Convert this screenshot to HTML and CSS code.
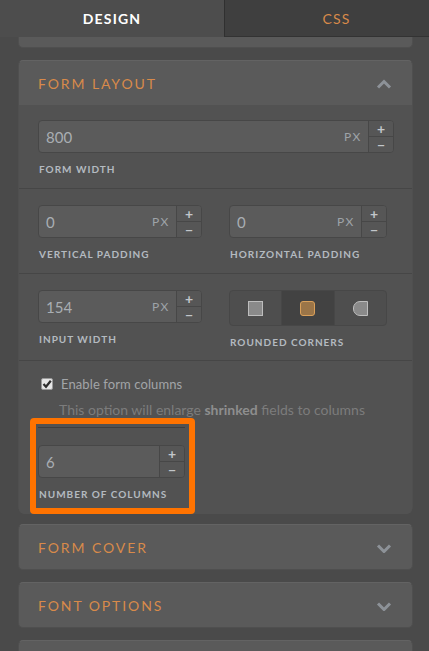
FILE: index.html
```html
<!DOCTYPE html>
<html lang="en">
<head>
  <meta charset="UTF-8">
  <meta name="viewport" content="width=device-width, initial-scale=1.0">
  <title>Form Designer</title>
  <link rel="stylesheet" href="styles.css">
</head>
<body>
  <div class="tabs">
    <div class="tab active">DESIGN</div>
    <div class="tab">CSS</div>
  </div>

  <div class="panel">
    <div class="card stub"></div>

    <div class="card">
      <div class="card-head">
        <span>FORM LAYOUT</span>
        <svg class="chevron" width="16" height="10" viewBox="0 0 16 10"><polyline points="2,8.5 8,2.5 14,8.5" /></svg>
      </div>
      <div class="card-body">
        <div class="section">
          <div class="field">
            <div class="num">
              <span class="val">800</span>
              <span class="unit">PX</span>
              <div class="spin"><span>+</span><span>&minus;</span></div>
            </div>
            <label>FORM WIDTH</label>
          </div>
        </div>

        <div class="section">
          <div class="cols">
            <div class="field">
              <div class="num">
                <span class="val">0</span>
                <span class="unit">PX</span>
                <div class="spin"><span>+</span><span>&minus;</span></div>
              </div>
              <label>VERTICAL PADDING</label>
            </div>
            <div class="field">
              <div class="num">
                <span class="val">0</span>
                <span class="unit">PX</span>
                <div class="spin"><span>+</span><span>&minus;</span></div>
              </div>
              <label>HORIZONTAL PADDING</label>
            </div>
          </div>
        </div>

        <div class="section third">
          <div class="cols">
            <div class="field">
              <div class="num">
                <span class="val">154</span>
                <span class="unit">PX</span>
                <div class="spin"><span>+</span><span>&minus;</span></div>
              </div>
              <label>INPUT WIDTH</label>
            </div>
            <div class="field">
              <div class="corners">
                <div class="corner"><i class="sq sharp"></i></div>
                <div class="corner on"><i class="sq soft"></i></div>
                <div class="corner"><i class="sq round"></i></div>
              </div>
              <label>ROUNDED CORNERS</label>
            </div>
          </div>
        </div>

        <div class="section last">
          <div class="check">
            <span class="box">
              <svg width="10" height="10" viewBox="0 0 10 10"><polyline points="1.5,5 4,7.8 8.8,1.8" /></svg>
            </span>
            Enable form columns
          </div>
          <p class="hint">This option will enlarge <b>shrinked</b> fields to columns</p>
          <div class="mark">
            <div class="mark-inner">
              <div class="field">
                <div class="num short">
                  <span class="val">6</span>
                  <div class="spin"><span>+</span><span>&minus;</span></div>
                </div>
                <label>NUMBER OF COLUMNS</label>
              </div>
            </div>
          </div>
        </div>
      </div>
    </div>

    <div class="card">
      <div class="card-head">
        <span>FORM COVER</span>
        <svg class="chevron" width="16" height="10" viewBox="0 0 16 10"><polyline points="2,2.5 8,8.5 14,2.5" /></svg>
      </div>
    </div>

    <div class="card">
      <div class="card-head">
        <span>FONT OPTIONS</span>
        <svg class="chevron" width="16" height="10" viewBox="0 0 16 10"><polyline points="2,2.5 8,8.5 14,2.5" /></svg>
      </div>
    </div>

    <div class="card">
      <div class="card-head"></div>
    </div>
  </div>
</body>
</html>
```

FILE: styles.css
```css
:root {
  --bg: #4a4a4a;
  --card: #5a5a5a;
  --body: #525252;
  --line: #464646;
  --orange: #d88a4a;
  --label: #b4bac0;
  --val: #a9aeb3;
}

html, body {
  margin: 0;
  padding: 0;
  overflow: hidden;
}
body {
  background: var(--bg);
  font-family: Lato, "Open Sans", sans-serif;
  width: 429px;
  height: 651px;
}

.tabs {
  display: flex;
  width: 448px;
  height: 37px;
}
.tab {
  width: 224px;
  flex: none;
  box-sizing: border-box;
  display: flex;
  align-items: center;
  justify-content: center;
  font-size: 14px;
  letter-spacing: 1.2px;
  color: var(--orange);
  background: #3f3f3f;
  border-left: 1px solid #303030;
  border-bottom: 1px solid #333;
}
.tab.active {
  background: #4d4d4d;
  color: #fff;
  font-weight: 700;
  border: none;
}

.panel {
  padding: 0 16px 0 18px;
}
.card {
  background: var(--card);
  border: 1px solid #4f4f4f;
  border-top-color: #636363;
  border-radius: 5px;
  margin-bottom: 12px;
}
.card.stub {
  height: 10px;
  border-top: none;
  border-radius: 0 0 5px 5px;
}
.card-head {
  height: 44px;
  display: flex;
  align-items: center;
  justify-content: space-between;
  padding: 0 20px 0 19px;
  font-size: 14px;
  letter-spacing: 1.9px;
  color: var(--orange);
}
.chevron {
  fill: none;
  stroke: #8d9298;
  stroke-width: 3;
  margin-top: 2px;
}
.card-body {
  background: var(--body);
  border-radius: 0 0 5px 5px;
}

.section {
  padding: 15px 18px 13px 19px;
  border-bottom: 1px solid var(--line);
}
.section + .section {
  padding-top: 16px;
}
.section.third {
  padding-bottom: 12px;
}
.section.last {
  border-bottom: none;
  padding-top: 15px;
  padding-bottom: 0;
}
.cols {
  display: grid;
  grid-template-columns: 164px 158px;
  column-gap: 27px;
}

.field label {
  display: block;
  margin-top: 10px;
  font-size: 10px;
  line-height: 12px;
  font-weight: 700;
  letter-spacing: 1px;
  color: var(--label);
  padding-left: 1px;
}
.num {
  display: flex;
  align-items: stretch;
  height: 33px;
  box-sizing: border-box;
  background: #5b5b5b;
  border: 1px solid #474747;
  border-radius: 4px;
}
.val {
  flex: 1;
  display: flex;
  align-items: center;
  padding-left: 7px;
  font-size: 15px;
  color: var(--val);
}
.unit {
  display: flex;
  align-items: center;
  padding-right: 6px;
  font-size: 12px;
  letter-spacing: 1.6px;
  color: #9ea3a8;
}
.spin {
  width: 24px;
  flex: none;
  display: flex;
  flex-direction: column;
  border-left: 1px solid #474747;
  background: #565656;
  border-radius: 0 3px 3px 0;
}
.spin span {
  flex: 1;
  display: flex;
  align-items: center;
  justify-content: center;
  font-size: 14px;
  font-weight: 700;
  line-height: 1;
  color: #c2c6ca;
}
.spin span + span {
  border-top: 1px solid #474747;
}

.corners {
  display: flex;
  height: 36px;
  box-sizing: border-box;
  border: 1px solid #474747;
  border-radius: 4px;
  background: #4e4e4e;
  overflow: hidden;
}
.corner {
  flex: 1;
  display: flex;
  align-items: center;
  justify-content: center;
}
.corner + .corner {
  border-left: 1px solid #474747;
}
.corner.on {
  background: #424242;
}
.sq {
  width: 13px;
  height: 13px;
  background: #8a8a8a;
  border: 1px solid #bdbdbd;
}
.sq.soft {
  background: #9b7548;
  border-color: #daa05a;
  border-radius: 3px;
}
.sq.round {
  border-radius: 7px 0 0 7px;
}

.check {
  display: flex;
  align-items: center;
  gap: 8px;
  height: 16px;
  padding-left: 3px;
  font-size: 13px;
  letter-spacing: 0.1px;
  color: #a2a5a8;
}
.box {
  width: 10px;
  height: 10px;
  display: flex;
  align-items: center;
  justify-content: center;
  background: #e6e6e6;
  border: 1px solid #9a9a9a;
  border-radius: 2px;
}
.box svg {
  fill: none;
  stroke: #2e2e2e;
  stroke-width: 2.2;
}
.hint {
  margin: 10px 0 0 21px;
  font-size: 14px;
  line-height: 16px;
  color: #7c7c7c;
}
.hint b {
  color: #8e8e8e;
}

.mark {
  width: 165px;
  box-sizing: border-box;
  margin: 0 0 -3px -8px;
  border: 6px solid #ff7300;
  border-radius: 4px;
  position: relative;
}
.mark-inner {
  padding: 3px 4px 8px 2px;
}
.mark-inner::before {
  content: "";
  display: block;
  height: 1px;
  background: #3e3e3e;
  margin-bottom: 17px;
}
.num.short {
  width: 147px;
}
```
